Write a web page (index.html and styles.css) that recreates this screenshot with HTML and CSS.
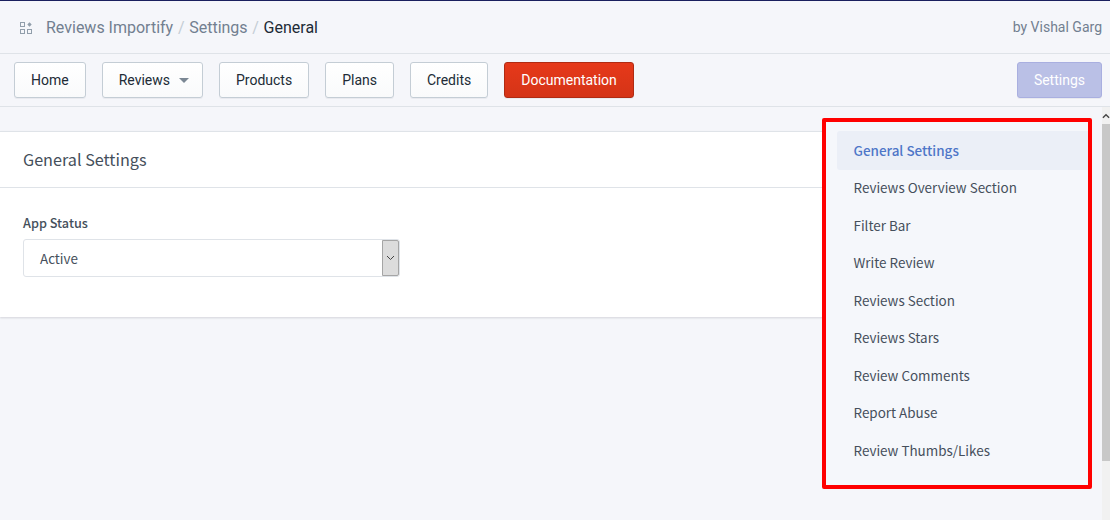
FILE: index.html
```html
<!DOCTYPE html>
<html lang="en">
<head>
    <meta charset="UTF-8">
    <meta name="viewport" content="width=device-width, initial-scale=1.0">
    <title>General Settings</title>
    <link rel="stylesheet" href="styles.css">
</head>
<body>
    <div class="topbar">
        <div class="breadcrumb">
            <svg class="apps-icon" width="14" height="14" viewBox="0 0 14 14">
                <rect x="1.5" y="1.5" width="4" height="4" fill="none" stroke="#919eab"/>
                <rect x="1.5" y="8.5" width="4" height="4" fill="none" stroke="#919eab"/>
                <rect x="8.5" y="8.5" width="4" height="4" fill="none" stroke="#919eab"/>
                <path d="M10.5 1.2l2.2 2.3-2.2 2.3-2.2-2.3z" fill="#919eab"/>
            </svg>
            <span>Reviews Importify</span>
            <span class="sep">/</span>
            <span>Settings</span>
            <span class="sep">/</span>
            <span class="current">General</span>
        </div>
        <div class="author">by Vishal Garg</div>
    </div>

    <div class="navbar">
        <a class="btn">Home</a>
        <a class="btn btn-caret">Reviews <span class="caret"></span></a>
        <a class="btn btn-narrow">Products</a>
        <a class="btn btn-wide">Plans</a>
        <a class="btn btn-narrow">Credits</a>
        <a class="btn btn-wide btn-red">Documentation</a>
        <a class="btn btn-settings">Settings</a>
    </div>

    <div class="page">
        <div class="main">
            <div class="card">
                <div class="card-title">General Settings</div>
                <div class="card-body">
                    <div class="field-label">App Status</div>
                    <div class="select">
                        <span class="select-value">Active</span>
                        <span class="select-arrow">
                            <svg width="9" height="6" viewBox="0 0 9 6"><path d="M1 1l3.5 3.5L8 1" fill="none" stroke="#444" stroke-width="1"/></svg>
                        </span>
                    </div>
                </div>
            </div>
        </div>

        <div class="side">
            <ul class="side-menu">
                <li class="active">General Settings</li>
                <li>Reviews Overview Section</li>
                <li>Filter Bar</li>
                <li>Write Review</li>
                <li>Reviews Section</li>
                <li>Reviews Stars</li>
                <li>Review Comments</li>
                <li>Report Abuse</li>
                <li>Review Thumbs/Likes</li>
            </ul>
        </div>

        <div class="scrollbar">
            <div class="scroll-up"><svg width="9" height="6" viewBox="0 0 9 6"><path d="M1 5l3.5-3.5L8 5" fill="none" stroke="#444" stroke-width="1.5"/></svg></div>
            <div class="scroll-thumb"></div>
        </div>
    </div>
</body>
</html>
```

FILE: styles.css
```css
* { box-sizing: border-box; }
html, body { height: 100%; }
body { margin: 0; height: 520px; overflow: hidden; background: #f5f6fa; font-family: Roboto, sans-serif; border-top: 1px solid #1a1f5e; }

.topbar { height: 53px; display: flex; align-items: center; justify-content: space-between; padding: 0 8px 0 19px; border-bottom: 1px solid #dfe3e8; }
.breadcrumb { display: flex; align-items: center; padding-top: 1px; font-size: 16px; color: #727f90; }
.apps-icon { margin-right: 13px; }
.sep { color: #c4cdd5; margin: 0 4.7px; }
.current { color: #212b36; }
.author { font-size: 14px; color: #727f90; }

.navbar { height: 53px; display: flex; align-items: center; gap: 16px; padding: 0 8px 0 14px; border-bottom: 1px solid #dfe3e8; }
.btn { display: block; height: 36px; line-height: 34px; padding: 0 16px; font-size: 14px; color: #212b36; background: linear-gradient(to bottom, #fff, #f9fafb); border: 1px solid #c4cdd5; border-radius: 3px; box-shadow: 0 1px 0 rgba(22,29,37,0.05); }
.btn-narrow { padding: 0 15.5px; }
.btn-wide { padding: 0 16.5px; }
.btn-caret { padding-right: 13px; }
.caret { display: inline-block; width: 0; height: 0; margin-left: 6px; vertical-align: 2px; border-left: 5px solid transparent; border-right: 5px solid transparent; border-top: 5px solid #7b8794; }
.btn-red { color: #fff; background: linear-gradient(to bottom, #e6391a, #d53417); border-color: #b02b13; }
.btn-settings { margin-left: auto; color: #fff; background: #bac0e6; border-color: #a9afe0; }

.page { position: relative; display: flex; height: 413px; }
.main { width: 837px; padding-top: 24px; }
.card { height: 186px; margin-right: -60px; background: #fff; border-top: 1px solid #dfe3e8; box-shadow: 0 1px 2px rgba(22,29,37,0.15); }
.card-title { height: 56px; line-height: 54px; padding-left: 23px; font-family: "Noto Sans CJK SC", sans-serif; font-size: 16.2px; color: #454f5b; border-bottom: 1px solid #dfe3e8; }
.card-body { padding: 24px 23px; font-family: "Noto Sans CJK SC", sans-serif; }
.field-label { font-size: 12.7px; line-height: 22px; font-weight: 500; color: #454f5b; margin-bottom: 5px; }
.select { width: 377px; height: 38px; display: flex; justify-content: space-between; background: #fff; border: 1px solid #dfe3e8; border-radius: 3px; }
.select-value { padding-left: 16px; line-height: 37px; font-size: 13.4px; color: #454f5b; }
.select-arrow { width: 17px; display: flex; align-items: center; justify-content: center; background: #dcdcdc; border: 1px solid #a5a5a5; border-radius: 0 2px 2px 0; }

.side { position: relative; z-index: 1; width: 270px; height: 371px; margin: 11px 0 0 -15px; padding: 9px 0 0 11px; background: #f5f7fb; border: 4px solid #ff0000; border-radius: 2px; }
.side-menu { list-style: none; margin: 0; padding: 0; font-family: "Noto Sans CJK SC", sans-serif; font-size: 13.45px; color: #454f5b; }
.side-menu li { height: 37.5px; line-height: 38px; padding-left: 16.5px; }
.side-menu li.active { height: 39px; line-height: 39px; margin-bottom: -1.75px; color: #4e76c8; font-weight: 500; background: #ebeff7; border-radius: 3px 0 0 3px; }

.scrollbar { position: absolute; top: 0; right: 0; width: 8px; height: 413px; background: #f1f1f1; }
.scroll-up { height: 17px; display: flex; align-items: center; justify-content: center; overflow: hidden; }
.scroll-thumb { height: 337px; background: #c8c8c8; }
```
